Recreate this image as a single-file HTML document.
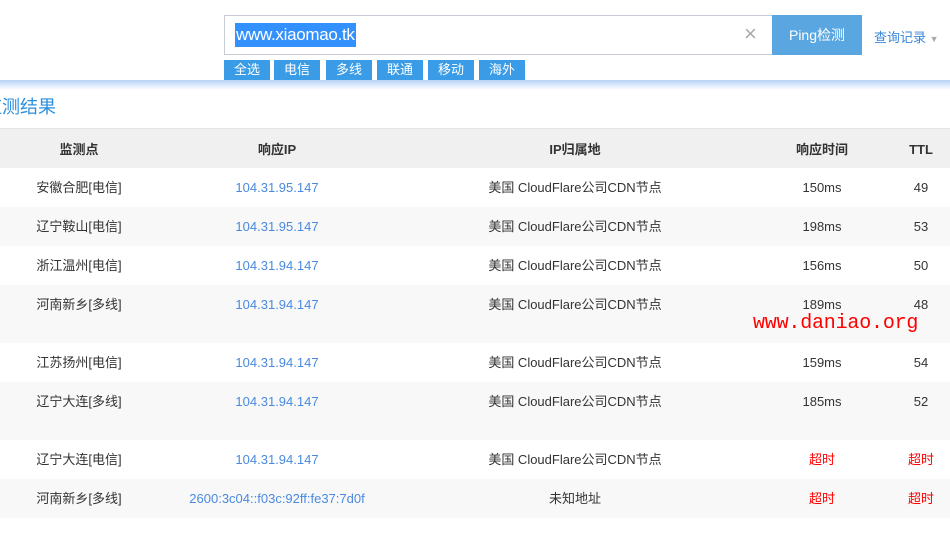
<!DOCTYPE html>
<html><head><meta charset="utf-8"><style>
*{margin:0;padding:0;box-sizing:border-box}
body{width:950px;height:540px;overflow:hidden;background:#fff;font-family:"Liberation Sans","Noto Sans CJK SC",sans-serif;font-size:13px;color:#333;position:relative}
.abs{position:absolute}
.inp{left:224px;top:15px;width:549px;height:40px;border:1px solid #c8ccd4;background:#fff}
.sel{left:235px;top:23px;height:24px;background:#3390ff;color:#fff;font-size:17px;line-height:24px;padding:0 1px;letter-spacing:-0.3px}
.btn{left:772px;top:15px;width:90px;height:40px;background:#5aa6e0;color:#fff;font-size:14px;line-height:40px;text-align:center}
.tag{top:60px;height:20px;width:46px;background:#3a9be6;color:#fff;font-size:13px;line-height:20px;text-align:center}
.shadow{left:0;top:80px;width:950px;height:10px;background:linear-gradient(#b7d3f5,#fff)}
.row{left:0;width:950px}
.c{position:absolute;text-align:center;transform:translateX(-50%);white-space:nowrap;line-height:16px}
.ip{color:#4a8ae0}
.red{color:#f00}
</style></head><body>
<div class="abs inp"></div>
<div class="abs sel">www.xiaomao.tk</div>
<div class="abs" style="left:744px;top:22px;color:#aaa;font-size:22px;line-height:24px">×</div>
<div class="abs btn">Ping检测</div>
<div class="abs" style="left:874px;top:27px;color:#3a86d8;font-size:13px">查询记录 <span style="color:#aaa;font-size:9px">▼</span></div>
<div class="abs tag" style="left:224px">全选</div>
<div class="abs tag" style="left:274px">电信</div>
<div class="abs tag" style="left:326px">多线</div>
<div class="abs tag" style="left:377px">联通</div>
<div class="abs tag" style="left:428px">移动</div>
<div class="abs tag" style="left:479px">海外</div>
<div class="abs shadow"></div>
<div class="abs" style="left:-16px;top:93px;color:#2d8fdc;font-size:18px">监测结果</div>
<div class="abs row" style="top:128px;height:40px;background:#f0f0f0;border-top:1px solid #e4e4e4;font-weight:bold">
<span class="c" style="left:79px;top:13px">监测点</span><span class="c" style="left:277px;top:13px">响应IP</span><span class="c" style="left:575px;top:13px">IP归属地</span><span class="c" style="left:822px;top:13px">响应时间</span><span class="c" style="left:921px;top:13px">TTL</span></div>

<div class="abs row" style="top:168px;height:39px"><span class="c" style="left:79px;top:12px">安徽合肥[电信]</span><span class="c ip" style="left:277px;top:12px">104.31.95.147</span><span class="c" style="left:575px;top:12px">美国 CloudFlare公司CDN节点</span><span class="c" style="left:822px;top:12px">150ms</span><span class="c" style="left:921px;top:12px">49</span></div>
<div class="abs row" style="top:207px;height:39px;background:#f8f8f8"><span class="c" style="left:79px;top:12px">辽宁鞍山[电信]</span><span class="c ip" style="left:277px;top:12px">104.31.95.147</span><span class="c" style="left:575px;top:12px">美国 CloudFlare公司CDN节点</span><span class="c" style="left:822px;top:12px">198ms</span><span class="c" style="left:921px;top:12px">53</span></div>
<div class="abs row" style="top:246px;height:39px"><span class="c" style="left:79px;top:12px">浙江温州[电信]</span><span class="c ip" style="left:277px;top:12px">104.31.94.147</span><span class="c" style="left:575px;top:12px">美国 CloudFlare公司CDN节点</span><span class="c" style="left:822px;top:12px">156ms</span><span class="c" style="left:921px;top:12px">50</span></div>
<div class="abs row" style="top:285px;height:58px;background:#f8f8f8"><span class="c" style="left:79px;top:12px">河南新乡[多线]</span><span class="c ip" style="left:277px;top:12px">104.31.94.147</span><span class="c" style="left:575px;top:12px">美国 CloudFlare公司CDN节点</span><span class="c" style="left:822px;top:12px">189ms</span><span class="c" style="left:921px;top:12px">48</span>
<span class="abs" style="left:753px;top:28px;color:#f00;font-family:'Liberation Mono',monospace;font-size:20px;line-height:22px;letter-spacing:-0.2px">www.daniao.org</span></div>
<div class="abs row" style="top:343px;height:39px"><span class="c" style="left:79px;top:12px">江苏扬州[电信]</span><span class="c ip" style="left:277px;top:12px">104.31.94.147</span><span class="c" style="left:575px;top:12px">美国 CloudFlare公司CDN节点</span><span class="c" style="left:822px;top:12px">159ms</span><span class="c" style="left:921px;top:12px">54</span></div>
<div class="abs row" style="top:382px;height:58px;background:#f8f8f8"><span class="c" style="left:79px;top:12px">辽宁大连[多线]</span><span class="c ip" style="left:277px;top:12px">104.31.94.147</span><span class="c" style="left:575px;top:12px">美国 CloudFlare公司CDN节点</span><span class="c" style="left:822px;top:12px">185ms</span><span class="c" style="left:921px;top:12px">52</span></div>
<div class="abs row" style="top:440px;height:39px"><span class="c" style="left:79px;top:12px">辽宁大连[电信]</span><span class="c ip" style="left:277px;top:12px">104.31.94.147</span><span class="c" style="left:575px;top:12px">美国 CloudFlare公司CDN节点</span><span class="c red" style="left:822px;top:12px">超时</span><span class="c red" style="left:921px;top:12px">超时</span></div>
<div class="abs row" style="top:479px;height:39px;background:#f8f8f8"><span class="c" style="left:79px;top:12px">河南新乡[多线]</span><span class="c ip" style="left:277px;top:12px">2600:3c04::f03c:92ff:fe37:7d0f</span><span class="c" style="left:575px;top:12px">未知地址</span><span class="c red" style="left:822px;top:12px">超时</span><span class="c red" style="left:921px;top:12px">超时</span></div>
</body></html>
